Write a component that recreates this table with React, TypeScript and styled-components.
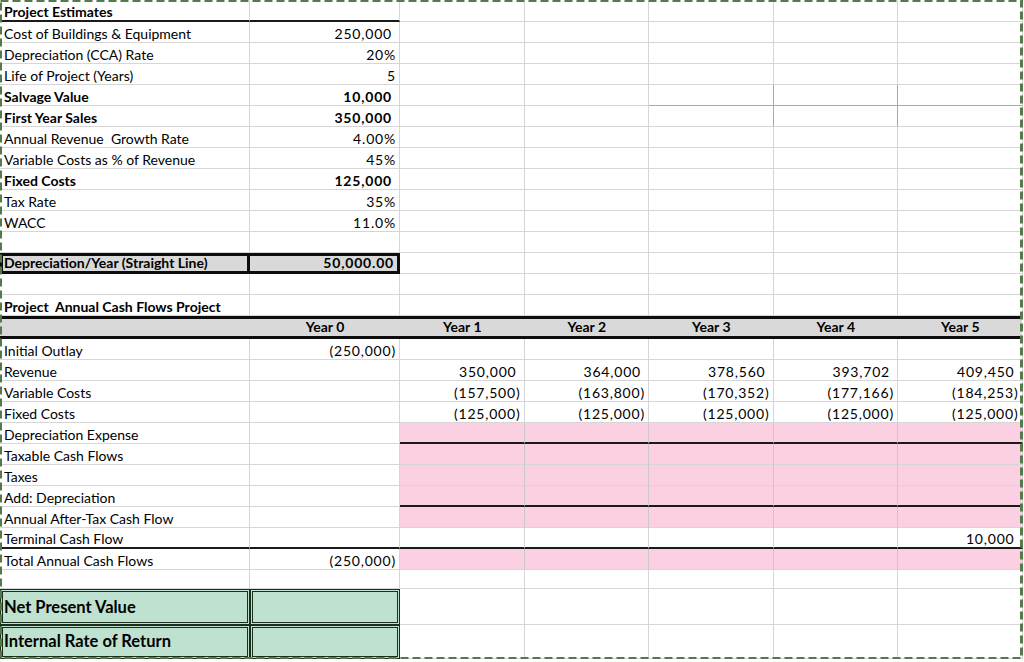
import React from 'react';
import styled, { createGlobalStyle } from 'styled-components';

const GRID = '#d6d6d6';
const PINK = '#fbd0e2';
const GRAY = '#d9d9d9';
const GREEN = '#bfe1cf';
const DARK_GRID = '#a9a9a9';
const RULE = '2px solid #1a1a1a';
const HEAVY = '3px solid #0d0d0d';
const DOUBLE = '3px double #1c2e1c';

const GlobalStyle = createGlobalStyle`
  html, body { margin: 0; padding: 0; background: #ffffff; }
  body {
    font-family: Lato, "Liberation Sans", Arial, sans-serif;
    color: #000000;
    overflow: hidden;
  }
`;

const COLS = '250px 150px repeat(5, 124.5px)';

const Sheet = styled.div`
  position: relative;
  width: 1022px;
  padding-top: 1px;
`;

const Row = styled.div<{ $h?: number }>`
  display: grid;
  grid-template-columns: ${COLS};
  height: ${(p) => p.$h ?? 21}px;
`;

const HeaderRow = styled(Row)`
  box-sizing: border-box;
  background: ${GRAY};
  border-top: ${HEAVY};
  border-bottom: ${HEAVY};
`;

type Align = 'left' | 'right' | 'center';

const Cell = styled.div<{
  $align?: Align;
  $bold?: boolean;
  $fill?: string;
  $trail?: boolean;
  $rule?: string;
  $edge?: string;
}>`
  box-sizing: border-box;
  display: flex;
  align-items: flex-end;
  justify-content: ${(p) =>
    p.$align === 'right' ? 'flex-end' : p.$align === 'center' ? 'center' : 'flex-start'};
  padding: 0 ${(p) => (p.$align === 'right' ? (p.$trail ? 7 : 3) : 3)}px 1px
    ${(p) => (p.$align === 'left' || !p.$align ? 4 : 3)}px;
  font-size: 14px;
  line-height: 1;
  letter-spacing: ${(p) => (p.$align === 'right' ? '0.8px' : '0')};
  font-weight: ${(p) => (p.$bold ? 700 : 400)};
  background: ${(p) => p.$fill ?? 'transparent'};
  border-right: ${(p) => p.$edge ?? `1px solid ${GRID}`};
  border-bottom: ${(p) => p.$rule ?? `1px solid ${GRID}`};
  white-space: pre;
`;

const HeadCell = styled(Cell)`
  border: none;
  padding-bottom: 2px;
  letter-spacing: 0;
`;

const FramedCell = styled(Cell)<{ $frame: string; $open?: boolean; $large?: boolean }>`
  border: ${(p) => p.$frame};
  ${(p) => (p.$open ? 'border-left: none;' : 'padding-left: 1px;')}
  ${(p) => (p.$large ? 'font-size: 16.5px; padding-bottom: 7px;' : '')}
`;

const Marquee = styled.svg`
  position: absolute;
  left: 0;
  top: 0;
  pointer-events: none;
`;

type Spec = {
  text?: string;
  align?: Align;
  bold?: boolean;
  fill?: string;
  trail?: boolean;
  rule?: string;
  edge?: string;
};

const Line = ({ cells, h }: { cells: Spec[]; h?: number }) => (
  <Row $h={h}>
    {cells.map((c, i) => (
      <Cell
        key={i}
        $align={c.align ?? (i === 0 ? 'left' : 'right')}
        $bold={c.bold}
        $fill={c.fill}
        $trail={c.trail}
        $rule={c.rule}
        $edge={c.edge}
      >
        {c.text}
      </Cell>
    ))}
  </Row>
);

const blanks = (n: number, extra: Spec = {}): Spec[] => Array.from({ length: n }, () => ({ ...extra }));

const inputs: { label: string; value: string; trail?: boolean; bold?: boolean }[] = [
  { label: 'Cost of Buildings & Equipment', value: '250,000', trail: true },
  { label: 'Depreciation (CCA) Rate', value: '20%' },
  { label: 'Life of Project (Years)', value: '5' },
  { label: 'Salvage Value', value: '10,000', trail: true, bold: true },
  { label: 'First Year Sales', value: '350,000', trail: true, bold: true },
  { label: 'Annual Revenue  Growth Rate', value: '4.00%' },
  { label: 'Variable Costs as % of Revenue', value: '45%' },
  { label: 'Fixed Costs', value: '125,000', trail: true, bold: true },
  { label: 'Tax Rate', value: '35%' },
  { label: 'WACC', value: '11.0%' },
];

type Flow = {
  label: string;
  year0?: string;
  years?: string[];
  trail?: boolean;
  pink?: boolean;
  ruleYears?: boolean;
  ruleAll?: boolean;
};

const flows: Flow[] = [
  { label: 'Initial Outlay', year0: '(250,000)' },
  { label: 'Revenue', years: ['350,000', '364,000', '378,560', '393,702', '409,450'], trail: true },
  { label: 'Variable Costs', years: ['(157,500)', '(163,800)', '(170,352)', '(177,166)', '(184,253)'] },
  { label: 'Fixed Costs', years: ['(125,000)', '(125,000)', '(125,000)', '(125,000)', '(125,000)'] },
  { label: 'Depreciation Expense', pink: true, ruleYears: true },
  { label: 'Taxable Cash Flows', pink: true },
  { label: 'Taxes', pink: true },
  { label: 'Add: Depreciation', pink: true, ruleYears: true },
  { label: 'Annual After-Tax Cash Flow', pink: true },
  { label: 'Terminal Cash Flow', years: ['', '', '', '', '10,000'], trail: true, ruleAll: true },
  { label: 'Total Annual Cash Flows', year0: '(250,000)', pink: true },
];

const inputExtras = (i: number): Spec[] => {
  // subtle darker borders around a few cells in columns E–G
  const row: Spec[] = blanks(5);
  if (i === 3) {
    row[2] = { edge: `1px solid ${DARK_GRID}`, rule: `1px solid ${DARK_GRID}` };
    row[3] = { edge: `1px solid ${DARK_GRID}`, rule: `1px solid ${DARK_GRID}` };
    row[4] = { rule: `1px solid ${DARK_GRID}` };
  }
  if (i === 4) {
    row[2] = { edge: `1px solid ${DARK_GRID}` };
    row[3] = { edge: `1px solid ${DARK_GRID}` };
  }
  return row;
};

const years = ['Year 0', 'Year 1', 'Year 2', 'Year 3', 'Year 4', 'Year 5'];

export default function App() {
  return (
    <>
      <GlobalStyle />
      <Sheet>
        <Line
          cells={[
            { text: 'Project Estimates', bold: true, rule: RULE },
            { rule: RULE },
            ...blanks(5),
          ]}
        />
        {inputs.map((r, i) => (
          <Line
            key={r.label}
            cells={[
              { text: r.label, bold: r.bold },
              { text: r.value, bold: r.bold, trail: r.trail },
              ...inputExtras(i),
            ]}
          />
        ))}
        <Line cells={blanks(7)} />
        <Row>
          <FramedCell $frame={HEAVY} $fill={GRAY} $bold>
            Depreciation/Year (Straight Line)
          </FramedCell>
          <FramedCell $frame={HEAVY} $open $fill={GRAY} $bold $align="right">
            50,000.00
          </FramedCell>
          {blanks(5).map((_, i) => (
            <Cell key={i} />
          ))}
        </Row>
        <Line cells={blanks(7)} />
        <Line cells={[{ text: 'Project  Annual Cash Flows Project', bold: true }, ...blanks(6)]} />
        <HeaderRow $h={23}>
          <HeadCell />
          {years.map((y) => (
            <HeadCell key={y} $align="center" $bold>
              {y}
            </HeadCell>
          ))}
        </HeaderRow>
        {flows.map((f) => {
          const yearCells: Spec[] = Array.from({ length: 5 }, (_, k) => ({
            text: f.years?.[k],
            trail: f.trail,
            fill: f.pink ? PINK : undefined,
            rule: f.ruleYears || f.ruleAll ? RULE : undefined,
            edge: f.pink ? '1px solid #c9c9c9' : undefined,
          }));
          return (
            <Line
              key={f.label}
              cells={[
                { text: f.label, rule: f.ruleAll ? RULE : undefined },
                { text: f.year0, rule: f.ruleAll ? RULE : undefined },
                ...yearCells,
              ]}
            />
          );
        })}
        <Line h={19} cells={blanks(7)} />
        {[
          { label: 'Net Present Value', h: 36 },
          { label: 'Internal Rate of Return', h: 34 },
        ].map((r) => (
          <Row key={r.label} $h={r.h}>
            <FramedCell $frame={DOUBLE} $fill={GREEN} $bold $large>
              {r.label}
            </FramedCell>
            <FramedCell $frame={DOUBLE} $fill={GREEN} />
            {blanks(5).map((_, i) => (
              <Cell key={i} />
            ))}
          </Row>
        ))}
        <Marquee width={1024} height={662}>
          <rect
            x={0.5}
            y={0.5}
            width={1021}
            height={658}
            fill="none"
            stroke="#54794a"
            strokeWidth={3}
            strokeDasharray="8 4"
          />
        </Marquee>
      </Sheet>
    </>
  );
}
